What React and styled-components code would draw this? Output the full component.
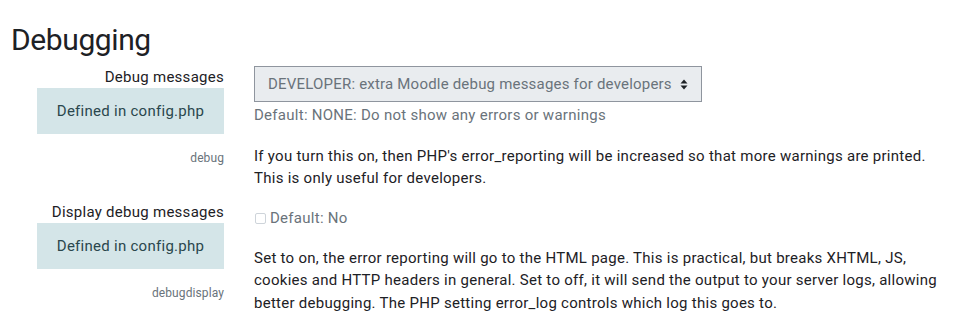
import React from "react";
import styled, { createGlobalStyle } from "styled-components";

const GlobalStyle = createGlobalStyle`
  html, body { margin: 0; padding: 0; background: #fff; }
  body {
    font-family: Roboto, "Noto Sans", "Liberation Sans", sans-serif;
    color: #1d2125;
    letter-spacing: 0.27px;
    -webkit-font-smoothing: antialiased;
  }
`;

const Page = styled.div`
  padding: 22px 14px 0 11px;
`;

const Heading = styled.h2`
  margin: 0 0 9px;
  font-size: 30px;
  line-height: 36px;
  font-weight: 400;
  letter-spacing: -0.4px;
  color: #1d2125;
`;

const SettingRow = styled.div`
  display: grid;
  grid-template-columns: 213px 1fr;
  column-gap: 30px;
  margin-bottom: 12.5px;
`;

const LabelCol = styled.div`
  display: flex;
  flex-direction: column;
  align-items: flex-end;
`;

const Label = styled.label`
  font-size: 15px;
  line-height: 21px;
  color: #1d2125;
  text-align: right;
`;

const OverrideBox = styled.div`
  width: 187px;
  padding: 11.5px 0;
  background: #d4e5e8;
  color: #2a474d;
  font-size: 15px;
  line-height: 22.5px;
  text-align: center;
`;

const SettingName = styled.div`
  margin-top: 15.5px;
  font-size: 12px;
  line-height: 18px;
  letter-spacing: 0.1px;
  color: #6a737b;
`;

const FieldCol = styled.div`
  display: flex;
  flex-direction: column;
  align-items: flex-start;
  padding-top: ${(p) => p.$top || 0}px;
`;

const SelectBox = styled.div`
  box-sizing: border-box;
  margin-top: -1px;
  width: 448px;
  height: 36px;
  padding: 0 13px 0 13px;
  display: flex;
  align-items: center;
  justify-content: space-between;
  background: #e9ecef;
  border: 1px solid #8f959e;
  color: #6a737b;
  font-size: 15px;
  letter-spacing: 0.2px;
  white-space: nowrap;
`;

const DefaultInfo = styled.div`
  display: flex;
  align-items: center;
  gap: 4px;
  margin-top: ${(p) => p.$top || 0}px;
  font-size: 15px;
  line-height: 22.5px;
  color: #6a737b;
`;

const CheckBox = styled.span`
  box-sizing: border-box;
  width: 11px;
  height: 11px;
  margin-left: 1px;
  border: 1px solid #ced4da;
  border-radius: 2px;
  background: #fff;
`;

const Description = styled.p`
  margin: ${(p) => p.$top || 18}px 0 0;
  font-size: 15px;
  line-height: 22.5px;
  color: #1d2125;
`;

const SortArrows = () => (
  <svg width="8" height="11" viewBox="0 0 8 11">
    <path d="M4 0.5 L7.5 4.5 H0.5 Z" fill="#1d2125" />
    <path d="M4 10.5 L7.5 6.5 H0.5 Z" fill="#1d2125" />
  </svg>
);

export default function App() {
  return (
    <>
      <GlobalStyle />
      <Page>
        <Heading>Debugging</Heading>

        <SettingRow>
          <LabelCol>
            <Label>Debug messages</Label>
            <OverrideBox>Defined in config.php</OverrideBox>
            <SettingName>debug</SettingName>
          </LabelCol>
          <FieldCol>
            <SelectBox>
              <span>DEVELOPER: extra Moodle debug messages for developers</span>
              <SortArrows />
            </SelectBox>
            <DefaultInfo $top={2}>Default: NONE: Do not show any errors or warnings</DefaultInfo>
            <Description>
              If you turn this on, then PHP's error_reporting will be increased so that more warnings are printed.
              This is only useful for developers.
            </Description>
          </FieldCol>
        </SettingRow>

        <SettingRow>
          <LabelCol>
            <Label>Display debug messages</Label>
            <OverrideBox>Defined in config.php</OverrideBox>
            <SettingName>debugdisplay</SettingName>
          </LabelCol>
          <FieldCol $top={5}>
            <DefaultInfo>
              <CheckBox />
              Default: No
            </DefaultInfo>
            <Description $top={17}>
              Set to on, the error reporting will go to the HTML page. This is practical, but breaks XHTML, JS,
              cookies and HTTP headers in general. Set to off, it will send the output to your server logs, allowing
              better debugging. The PHP setting error_log controls which log this goes to.
            </Description>
          </FieldCol>
        </SettingRow>
      </Page>
    </>
  );
}
